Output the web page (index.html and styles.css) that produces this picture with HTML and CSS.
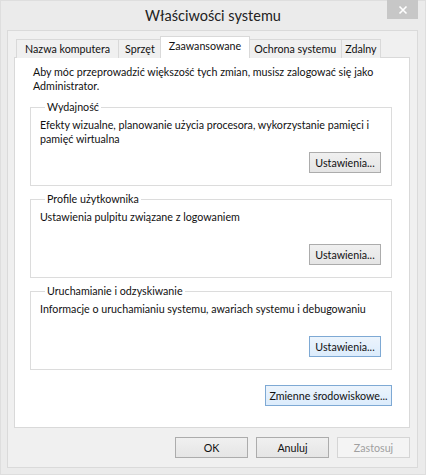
FILE: index.html
```html
<!DOCTYPE html>
<html lang="pl">
<head>
  <meta charset="UTF-8" />
  <title>Właściwości systemu</title>
  <link rel="stylesheet" href="styles.css">
</head>
<body>
  <div class="window">
    <div class="titlebar">
      <span></span>
      <div class="title">Właściwości systemu</div>
      <button class="close-btn" aria-label="Zamknij">
        <svg width="10" height="10" viewBox="0 0 10 10">
          <path d="M1.5 1.5 L8.5 8.5 M8.5 1.5 L1.5 8.5" stroke="#fff" stroke-width="1.6" />
        </svg>
      </button>
    </div>

    <div class="client">
      <div class="tabs">
        <div class="tab">Nazwa komputera</div>
        <div class="tab">Sprzęt</div>
        <div class="tab active">Zaawansowane</div>
        <div class="tab">Ochrona systemu</div>
        <div class="tab">Zdalny</div>
      </div>

      <div class="panel">
        <p class="intro">Aby móc przeprowadzić większość tych zmian, musisz zalogować się jako<br>Administrator.</p>

        <fieldset class="group">
          <legend>Wydajność</legend>
          <p>Efekty wizualne, planowanie użycia procesora, wykorzystanie pamięci i<br>pamięć wirtualna</p>
          <div class="group-actions">
            <button class="btn">Ustawienia...</button>
          </div>
        </fieldset>

        <fieldset class="group">
          <legend>Profile użytkownika</legend>
          <p>Ustawienia pulpitu związane z logowaniem</p>
          <div class="group-actions">
            <button class="btn">Ustawienia...</button>
          </div>
        </fieldset>

        <fieldset class="group">
          <legend>Uruchamianie i odzyskiwanie</legend>
          <p>Informacje o uruchamianiu systemu, awariach systemu i debugowaniu</p>
          <div class="group-actions">
            <button class="btn btn-focus">Ustawienia...</button>
          </div>
        </fieldset>

        <div class="env-row">
          <button class="btn btn-focus btn-env">Zmienne środowiskowe...</button>
        </div>
      </div>

      <div class="dialog-buttons">
        <button class="btn btn-dialog">OK</button>
        <button class="btn btn-dialog">Anuluj</button>
        <button class="btn btn-dialog" disabled>Zastosuj</button>
      </div>
    </div>
  </div>
</body>
</html>
```

FILE: styles.css
```css
body {
  margin: 0;
  padding: 0;
  background-color: #ebebeb;
  font-family: Lato, "Liberation Sans", sans-serif;
  font-size: 10.7px;
  color: #111;
}

.window {
  width: 426px;
  height: 475px;
  box-sizing: border-box;
  border: 1px solid #dedede;
}

.titlebar {
  height: 29px;
  display: grid;
  grid-template-columns: 1fr auto 1fr;
  align-items: start;
}

.title {
  font-size: 14.5px;
  color: #222;
  padding-top: 6px;
}

.close-btn {
  justify-self: end;
  margin-right: 7px;
  width: 31px;
  height: 19px;
  margin-top: -1px;
  border: none;
  background-color: #c7c7c7;
  display: flex;
  align-items: center;
  justify-content: center;
  padding: 0;
}

.client {
  margin: 0 7px 0 6px;
  height: 438px;
  box-sizing: border-box;
  border: 1px solid #dadada;
  background-color: #f0f0f0;
  padding: 6px 7px 0 6px;
}

.tabs {
  display: flex;
  align-items: flex-end;
  padding-left: 2px;
  height: 21px;
  position: relative;
  z-index: 1;
  margin-bottom: -1px;
  white-space: nowrap;
}

.tab {
  height: 19px;
  line-height: 18px;
  padding: 0 5px;
  border: 1px solid #d9d9d9;
  border-bottom: none;
  margin-left: -1px;
  background-color: #f0f0f0;
  box-sizing: border-box;
}

.tab:first-child {
  margin-left: 0;
  padding: 0 8px;
}

.tab:nth-child(2) {
  padding: 0 6px;
}

.tab:last-child {
  padding: 0 3px;
}

.tab.active {
  background-color: #fff;
  height: 22px;
  line-height: 18px;
  margin-left: -2px;
  margin-right: -1px;
  padding: 0 8px;
  position: relative;
}

.panel {
  height: 371px;
  box-sizing: border-box;
  background-color: #fff;
  border: 1px solid #d9d9d9;
  padding: 7px 17px 0 15px;
}

.intro {
  margin: 0 0 7px 3px;
  line-height: 14px;
  white-space: nowrap;
}

.group {
  margin: 0 0 6px 0;
  padding: 4px 10px 12px 9px;
  border: 1px solid #dcdcdc;
  height: 86px;
  min-width: 0;
  box-sizing: border-box;
  display: flex;
  flex-direction: column;
}

.group legend {
  padding: 0 2px;
  margin-left: 5px;
  line-height: 14px;
}

.group p {
  margin: 0;
  line-height: 14px;
  flex: 1;
  white-space: nowrap;
}

.group-actions {
  display: flex;
  justify-content: flex-end;
}

.btn {
  font-family: inherit;
  font-size: 10.7px;
  color: #111;
  height: 21px;
  padding: 0;
  white-space: nowrap;
  border: 1px solid #acacac;
  background: linear-gradient(#f0f0f0, #e5e5e5);
}

.btn-focus {
  border-color: #7ea9d4;
  background: linear-gradient(#ecf4fc, #dcecfc);
}

.group .btn {
  width: 72px;
}

.env-row {
  display: flex;
  justify-content: flex-end;
  margin-top: 15px;
}

.btn-env {
  width: 127px;
}

.dialog-buttons {
  display: flex;
  justify-content: flex-end;
  gap: 8px;
  margin-top: 9px;
}

.btn-dialog {
  width: 73px;
}

.btn-dialog:disabled {
  color: #a0a0a0;
  border-color: #d5d5d5;
  background: #f4f4f4;
}
```
